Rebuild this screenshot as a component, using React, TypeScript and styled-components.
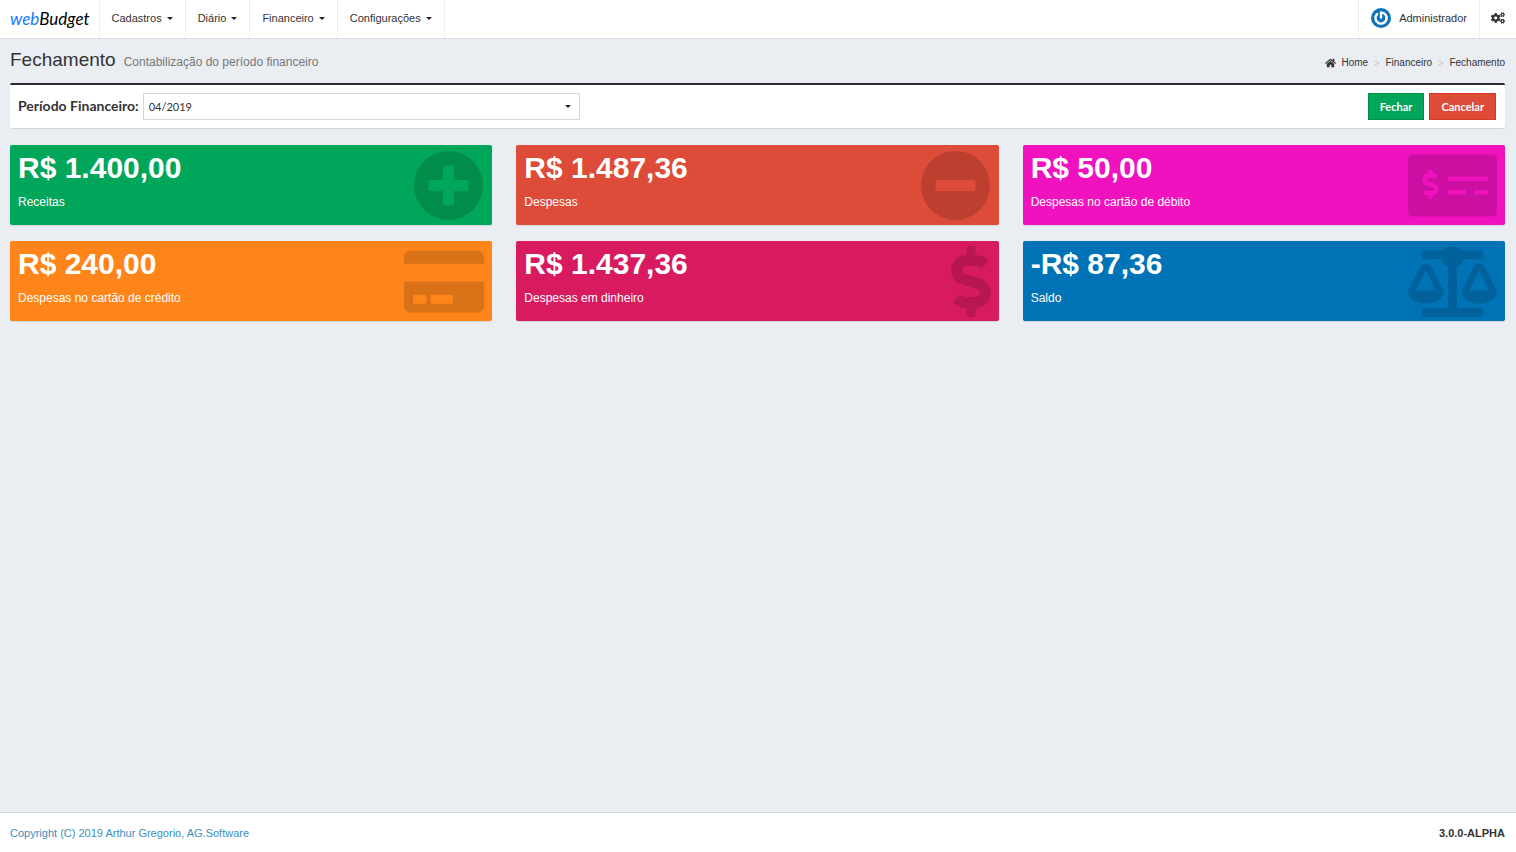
import React from 'react';
import styled, { createGlobalStyle } from 'styled-components';
import {
  FaBalanceScale,
  FaCogs,
  FaCreditCard,
  FaDollarSign,
  FaHome,
  FaMinusCircle,
  FaMoneyCheckAlt,
  FaPlusCircle,
} from 'react-icons/fa';
import type { IconType } from 'react-icons';

const GlobalStyle = createGlobalStyle`
  * { box-sizing: border-box; }
  body {
    margin: 0;
    background: #eaeef3;
    color: #333;
    font-family: "Liberation Sans", Arial, sans-serif;
    font-size: 11px;
    line-height: 16px;
  }
`;

const Page = styled.div`
  min-height: 100vh;
  display: flex;
  flex-direction: column;
`;

const Header = styled.header`
  display: flex;
  justify-content: space-between;
  height: 39px;
  background: #fff;
  border-bottom: 1px solid #d8dde5;
`;

const Nav = styled.nav`
  display: flex;
`;

const Brand = styled.a`
  display: flex;
  align-items: center;
  padding: 0 9px 0 10px;
  border-right: 1px solid #eee;
  color: #000;
  font-family: Lato, sans-serif;
  font-size: 17px;
  line-height: 24px;
  font-style: italic;
  text-decoration: none;
`;

const BrandAccent = styled.span`
  color: #0f7bff;
`;

const NavButton = styled.button`
  display: flex;
  align-items: center;
  gap: 5px;
  padding: 0 12px 2px;
  border: 0;
  border-right: 1px solid #eee;
  background: none;
  color: #333;
  font: inherit;
  cursor: pointer;
`;

const Caret = styled.span`
  margin-top: 1px;
  border: 3px solid transparent;
  border-top-color: #222;
  border-bottom: 0;
`;

const UserButton = styled(NavButton)`
  gap: 8px;
  border-right: 0;
  border-left: 1px solid #eee;
`;

const SettingsButton = styled(UserButton)`
  padding: 0 11px 2px;
  svg {
    width: 14px;
    height: 12px;
  }
`;

const Heading = styled.div`
  display: flex;
  justify-content: space-between;
  align-items: center;
  padding: 9px 11px 0 10px;
`;

const Title = styled.h1`
  display: flex;
  align-items: baseline;
  gap: 8px;
  margin: 0;
  font-size: 19px;
  line-height: 24px;
  font-weight: 400;
`;

const Subtitle = styled.small`
  color: #777;
  font-size: 12px;
`;

const Breadcrumb = styled.ol`
  display: flex;
  gap: 6px;
  margin: 4px 0 0;
  padding: 0;
  list-style: none;
  font-size: 10px;
  line-height: 12px;
`;

const Crumb = styled.li`
  display: flex;
  align-items: center;
  gap: 6px;
  & + &::before {
    content: ">";
    color: #bbb;
    font-size: 9px;
  }
`;

const CrumbLink = styled.a`
  display: flex;
  align-items: center;
  gap: 5px;
  color: #333;
  text-decoration: none;
  svg {
    width: 11px;
    height: 10px;
  }
`;

const Main = styled.main`
  flex: 1;
  padding: 9px 11px 16px 10px;
`;

const Toolbar = styled.form`
  display: flex;
  align-items: center;
  justify-content: space-between;
  padding: 8px 9px 8px 8px;
  margin-bottom: 17px;
  border-top: 2px solid #2b2b30;
  border-radius: 2px;
  background: #fff;
  box-shadow: 0 1px 1px rgba(0, 0, 0, 0.1);
  font-family: Lato, sans-serif;
`;

const Field = styled.div`
  display: flex;
  align-items: center;
  gap: 4px;
`;

const FieldLabel = styled.label`
  font-size: 14px;
  font-weight: 700;
  line-height: 16px;
  padding-bottom: 2px;
`;

const SelectWrap = styled.div`
  display: grid;
  align-items: center;
  width: 437px;
  & > * {
    grid-area: 1 / 1;
  }
  ${Caret} {
    justify-self: end;
    margin: 0 9px 0 0;
    pointer-events: none;
  }
`;

const Select = styled.select`
  width: 100%;
  height: 27px;
  padding: 0 5px;
  appearance: none;
  border: 1px solid #d2d6de;
  border-radius: 0;
  background: #fff;
  color: #333;
  font-family: inherit;
  font-size: 11px;
`;

const Actions = styled.div`
  display: flex;
  gap: 5px;
`;

const ActionButton = styled.button<{ $color: string; $edge: string }>`
  height: 27px;
  padding: 0 11px;
  border: 1px solid ${(p) => p.$edge};
  background: ${(p) => p.$color};
  color: #fff;
  font-family: inherit;
  font-size: 11px;
  font-weight: 700;
  cursor: pointer;
`;

const Cards = styled.div`
  display: grid;
  grid-template-columns: repeat(3, 1fr);
  gap: 16px 24px;
`;

const Card = styled.section<{ $color: string; $iconWidth: number }>`
  display: flex;
  justify-content: space-between;
  height: 80px;
  padding: 5px 8px 0;
  border-radius: 2px;
  background: ${(p) => p.$color};
  box-shadow: 0 1px 1px rgba(0, 0, 0, 0.1);
  color: #fff;
  & > svg {
    width: ${(p) => p.$iconWidth}px;
    height: 71px;
    color: rgba(0, 0, 0, 0.15);
  }
`;

const Amount = styled.h2`
  margin: 0 0 8px;
  font-size: 30px;
  line-height: 36px;
`;

const Caption = styled.p`
  margin: 0;
  font-size: 12px;
  line-height: 16px;
`;

const Footer = styled.footer`
  display: flex;
  justify-content: space-between;
  padding: 12px 11px 11px 10px;
  border-top: 1px solid #d2d6de;
  background: #fff;
`;

const FooterLink = styled.a`
  color: #3c8dbc;
  text-decoration: none;
`;

const menus = ['Cadastros', 'Diário', 'Financeiro', 'Configurações'];

type Summary = {
  amount: string;
  caption: string;
  color: string;
  icon: IconType;
  iconWidth: number;
};

const cards: Summary[] = [
  { amount: 'R$ 1.400,00', caption: 'Receitas', color: '#00a65a', icon: FaPlusCircle, iconWidth: 71 },
  { amount: 'R$ 1.487,36', caption: 'Despesas', color: '#dd4b39', icon: FaMinusCircle, iconWidth: 71 },
  { amount: 'R$ 50,00', caption: 'Despesas no cartão de débito', color: '#f012be', icon: FaMoneyCheckAlt, iconWidth: 89 },
  { amount: 'R$ 240,00', caption: 'Despesas no cartão de crédito', color: '#ff851b', icon: FaCreditCard, iconWidth: 80 },
  { amount: 'R$ 1.437,36', caption: 'Despesas em dinheiro', color: '#d81b60', icon: FaDollarSign, iconWidth: 40 },
  { amount: '-R$ 87,36', caption: 'Saldo', color: '#0073b7', icon: FaBalanceScale, iconWidth: 89 },
];

const Avatar = () => (
  <svg width="20" height="20" viewBox="0 0 20 20" aria-hidden="true">
    <circle cx="10" cy="10" r="10" fill="#0f73b5" />
    <path
      d="M10 9.6V4.4A5.6 5.6 0 1 1 6 6.1"
      fill="none"
      stroke="#fff"
      strokeWidth="2.4"
      strokeLinecap="round"
      strokeLinejoin="round"
    />
  </svg>
);

export default function App() {
  return (
    <Page>
      <GlobalStyle />
      <Header>
        <Nav>
          <Brand href="#">
            <BrandAccent>web</BrandAccent>Budget
          </Brand>
          {menus.map((name) => (
            <NavButton key={name} type="button">
              {name}
              <Caret />
            </NavButton>
          ))}
        </Nav>
        <Nav>
          <UserButton type="button">
            <Avatar />
            Administrador
          </UserButton>
          <SettingsButton type="button" aria-label="Configurações">
            <FaCogs />
          </SettingsButton>
        </Nav>
      </Header>
      <Heading>
        <Title>
          Fechamento <Subtitle>Contabilização do período financeiro</Subtitle>
        </Title>
        <Breadcrumb>
          <Crumb>
            <CrumbLink href="#">
              <FaHome />
              Home
            </CrumbLink>
          </Crumb>
          <Crumb>
            <CrumbLink href="#">Financeiro</CrumbLink>
          </Crumb>
          <Crumb>
            <CrumbLink href="#">Fechamento</CrumbLink>
          </Crumb>
        </Breadcrumb>
      </Heading>
      <Main>
        <Toolbar>
          <Field>
            <FieldLabel htmlFor="period">Período Financeiro:</FieldLabel>
            <SelectWrap>
              <Select id="period" defaultValue="04/2019">
                <option>04/2019</option>
              </Select>
              <Caret />
            </SelectWrap>
          </Field>
          <Actions>
            <ActionButton type="button" $color="#00a65a" $edge="#008d4c">
              Fechar
            </ActionButton>
            <ActionButton type="button" $color="#dd4b39" $edge="#d73925">
              Cancelar
            </ActionButton>
          </Actions>
        </Toolbar>
        <Cards>
          {cards.map(({ amount, caption, color, icon: Icon, iconWidth }) => (
            <Card key={caption} $color={color} $iconWidth={iconWidth}>
              <div>
                <Amount>{amount}</Amount>
                <Caption>{caption}</Caption>
              </div>
              <Icon />
            </Card>
          ))}
        </Cards>
      </Main>
      <Footer>
        <FooterLink href="#">Copyright (C) 2019 Arthur Gregorio, AG.Software</FooterLink>
        <strong>3.0.0-ALPHA</strong>
      </Footer>
    </Page>
  );
}
